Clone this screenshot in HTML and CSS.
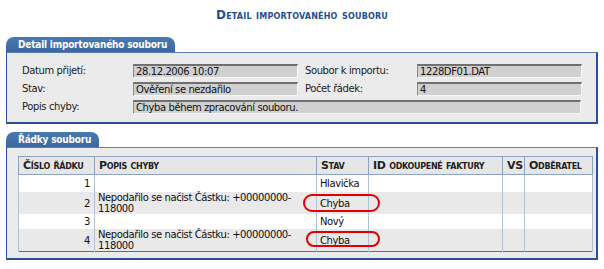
FILE: index.html
```html
<!DOCTYPE html>
<html lang="cs">
<head>
<meta charset="utf-8">
<title>Detail importovaného souboru</title>
<link rel="stylesheet" href="styles.css">
</head>
<body>
<h1 class="page-title">Detail importovaného souboru</h1>

<section class="panel">
  <div class="tab">Detail importovaného souboru</div>
  <div class="panel-body">
    <div class="form-grid">
      <div class="lbl">Datum přijetí:</div>
      <div class="field">28.12.2006 10:07</div>
      <div class="lbl lbl2">Soubor k importu:</div>
      <div class="field">1228DF01.DAT</div>

      <div class="lbl">Stav:</div>
      <div class="field">Ověření se nezdařilo</div>
      <div class="lbl lbl2">Počet řádek:</div>
      <div class="field">4</div>

      <div class="lbl">Popis chyby:</div>
      <div class="field wide">Chyba během zpracování souboru.</div>
    </div>
  </div>
</section>

<section class="panel panel-rows">
  <div class="tab">Řádky souboru</div>
  <div class="panel-body body-table">
    <div class="table-wrap">
      <table class="grid">
        <colgroup>
          <col class="c1"><col class="c2"><col class="c3"><col class="c4"><col class="c5"><col class="c6">
        </colgroup>
        <thead>
          <tr>
            <th>Číslo řádku</th>
            <th>Popis chyby</th>
            <th>Stav</th>
            <th>ID odkoupené faktury</th>
            <th>VS</th>
            <th>Odběratel</th>
          </tr>
        </thead>
        <tbody>
          <tr class="r-short">
            <td class="num">1</td><td></td><td>Hlavička</td><td></td><td></td><td></td>
          </tr>
          <tr class="alt">
            <td class="num">2</td><td class="desc">Nepodařilo se načist Částku: +00000000-<wbr>118000</td><td>Chyba</td><td></td><td></td><td></td>
          </tr>
          <tr class="r-short r3">
            <td class="num">3</td><td></td><td>Nový</td><td></td><td></td><td></td>
          </tr>
          <tr class="alt">
            <td class="num">4</td><td class="desc">Nepodařilo se načist Částku: +00000000-<wbr>118000</td><td>Chyba</td><td></td><td></td><td></td>
          </tr>
        </tbody>
      </table>
      <span class="mark mark-a"></span>
      <span class="mark mark-b"></span>
    </div>
  </div>
</section>
</body>
</html>
```

FILE: styles.css
```css
html, body {
  margin: 0;
  padding: 0;
  background: #ffffff;
}
body {
  font-family: "DejaVu Sans", Verdana, sans-serif;
  font-size: 10px;
  letter-spacing: -0.4px;
  color: #111111;
  width: 604px;
  height: 269px;
  overflow: hidden;
}

.page-title {
  margin: 0;
  padding-top: 8px;
  height: 28px;
  box-sizing: border-box;
  text-align: center;
  font-size: 12px;
  line-height: 15px;
  font-weight: bold;
  font-variant: small-caps;
  letter-spacing: 0.2px;
  color: #1e4f8f;
}

.panel {
  margin: 0 6px 0 6px;
}
.panel-rows {
  margin-top: 8px;
}

.tab {
  display: inline-block;
  height: 15px;
  line-height: 15px;
  padding: 0 8px 0 12px;
  margin-top: 9px;
  background: linear-gradient(#4a7ab2, #3a679e);
  color: #ffffff;
  font-family: "DejaVu Sans Condensed", "DejaVu Sans", sans-serif;
  font-weight: bold;
  font-size: 10px;
  letter-spacing: -0.2px;
  border-radius: 8px 8px 0 0;
  vertical-align: bottom;
}
.panel-rows .tab {
  margin-top: 0;
  padding-right: 8px;
}

.panel-body {
  background: #ebebeb;
  border: 1px solid #2c4d9c;
  border-top-color: #5a7fb8;
  border-right-width: 2px;
  border-bottom-width: 2px;
  padding: 11px 14px 8px 15px;
}

.form-grid {
  display: grid;
  grid-template-columns: 111px 172px 112px 164px;
  row-gap: 4px;
  align-items: center;
}
.lbl {
  color: #222222;
  line-height: 14px;
}
.field {
  height: 14px;
  box-sizing: border-box;
  width: 165px;
  background: #d0d0d0;
  border-top: 2px solid #707070;
  border-left: 1px solid #8a8a8a;
  border-right: 1px solid #f6f6f6;
  border-bottom: 1px solid #f6f6f6;
  padding: 0 2px;
  line-height: 11px;
  color: #111111;
  white-space: nowrap;
  overflow: hidden;
}
.field.wide {
  grid-column: 2 / 5;
  width: 448px;
}

.body-table {
  padding: 8px 3px 6px 11px;
}
.table-wrap {
  position: relative;
}

.grid {
  width: 574px;
  border-collapse: collapse;
  table-layout: fixed;
  background: #ffffff;
  border: 1px solid #4e6ea8;
}
.c1 { width: 76px; }
.c2 { width: 222px; }
.c3 { width: 52px; }
.c4 { width: 134px; }
.c5 { width: 22px; }
.c6 { width: 68px; }

.grid th {
  height: 17px;
  background: #e6e6e6;
  border: 1px solid #8ea2c8;
  text-align: left;
  padding: 0 4px;
  font-weight: bold;
  font-variant: small-caps;
  font-size: 11px;
  letter-spacing: -0.3px;
  color: #222222;
  white-space: nowrap;
  overflow: hidden;
}
.grid td {
  border-left: 1px solid #b4c0d8;
  border-right: 1px solid #b4c0d8;
  padding: 0 3px;
  line-height: 11px;
  height: 17px;
  vertical-align: middle;
}
.grid tr.r3 td {
  height: 15px;
}
.grid tr.alt td {
  background: #e9e9e9;
  height: 21px;
}
.grid td.num {
  text-align: right;
  padding-right: 4px;
}

.mark {
  position: absolute;
  border: 2.5px solid #e00000;
  border-radius: 9px;
  box-sizing: border-box;
  pointer-events: none;
}
.mark-a {
  left: 285px;
  top: 38px;
  width: 77px;
  height: 18px;
}
.mark-b {
  left: 288px;
  top: 75px;
  width: 74px;
  height: 16px;
}
```
